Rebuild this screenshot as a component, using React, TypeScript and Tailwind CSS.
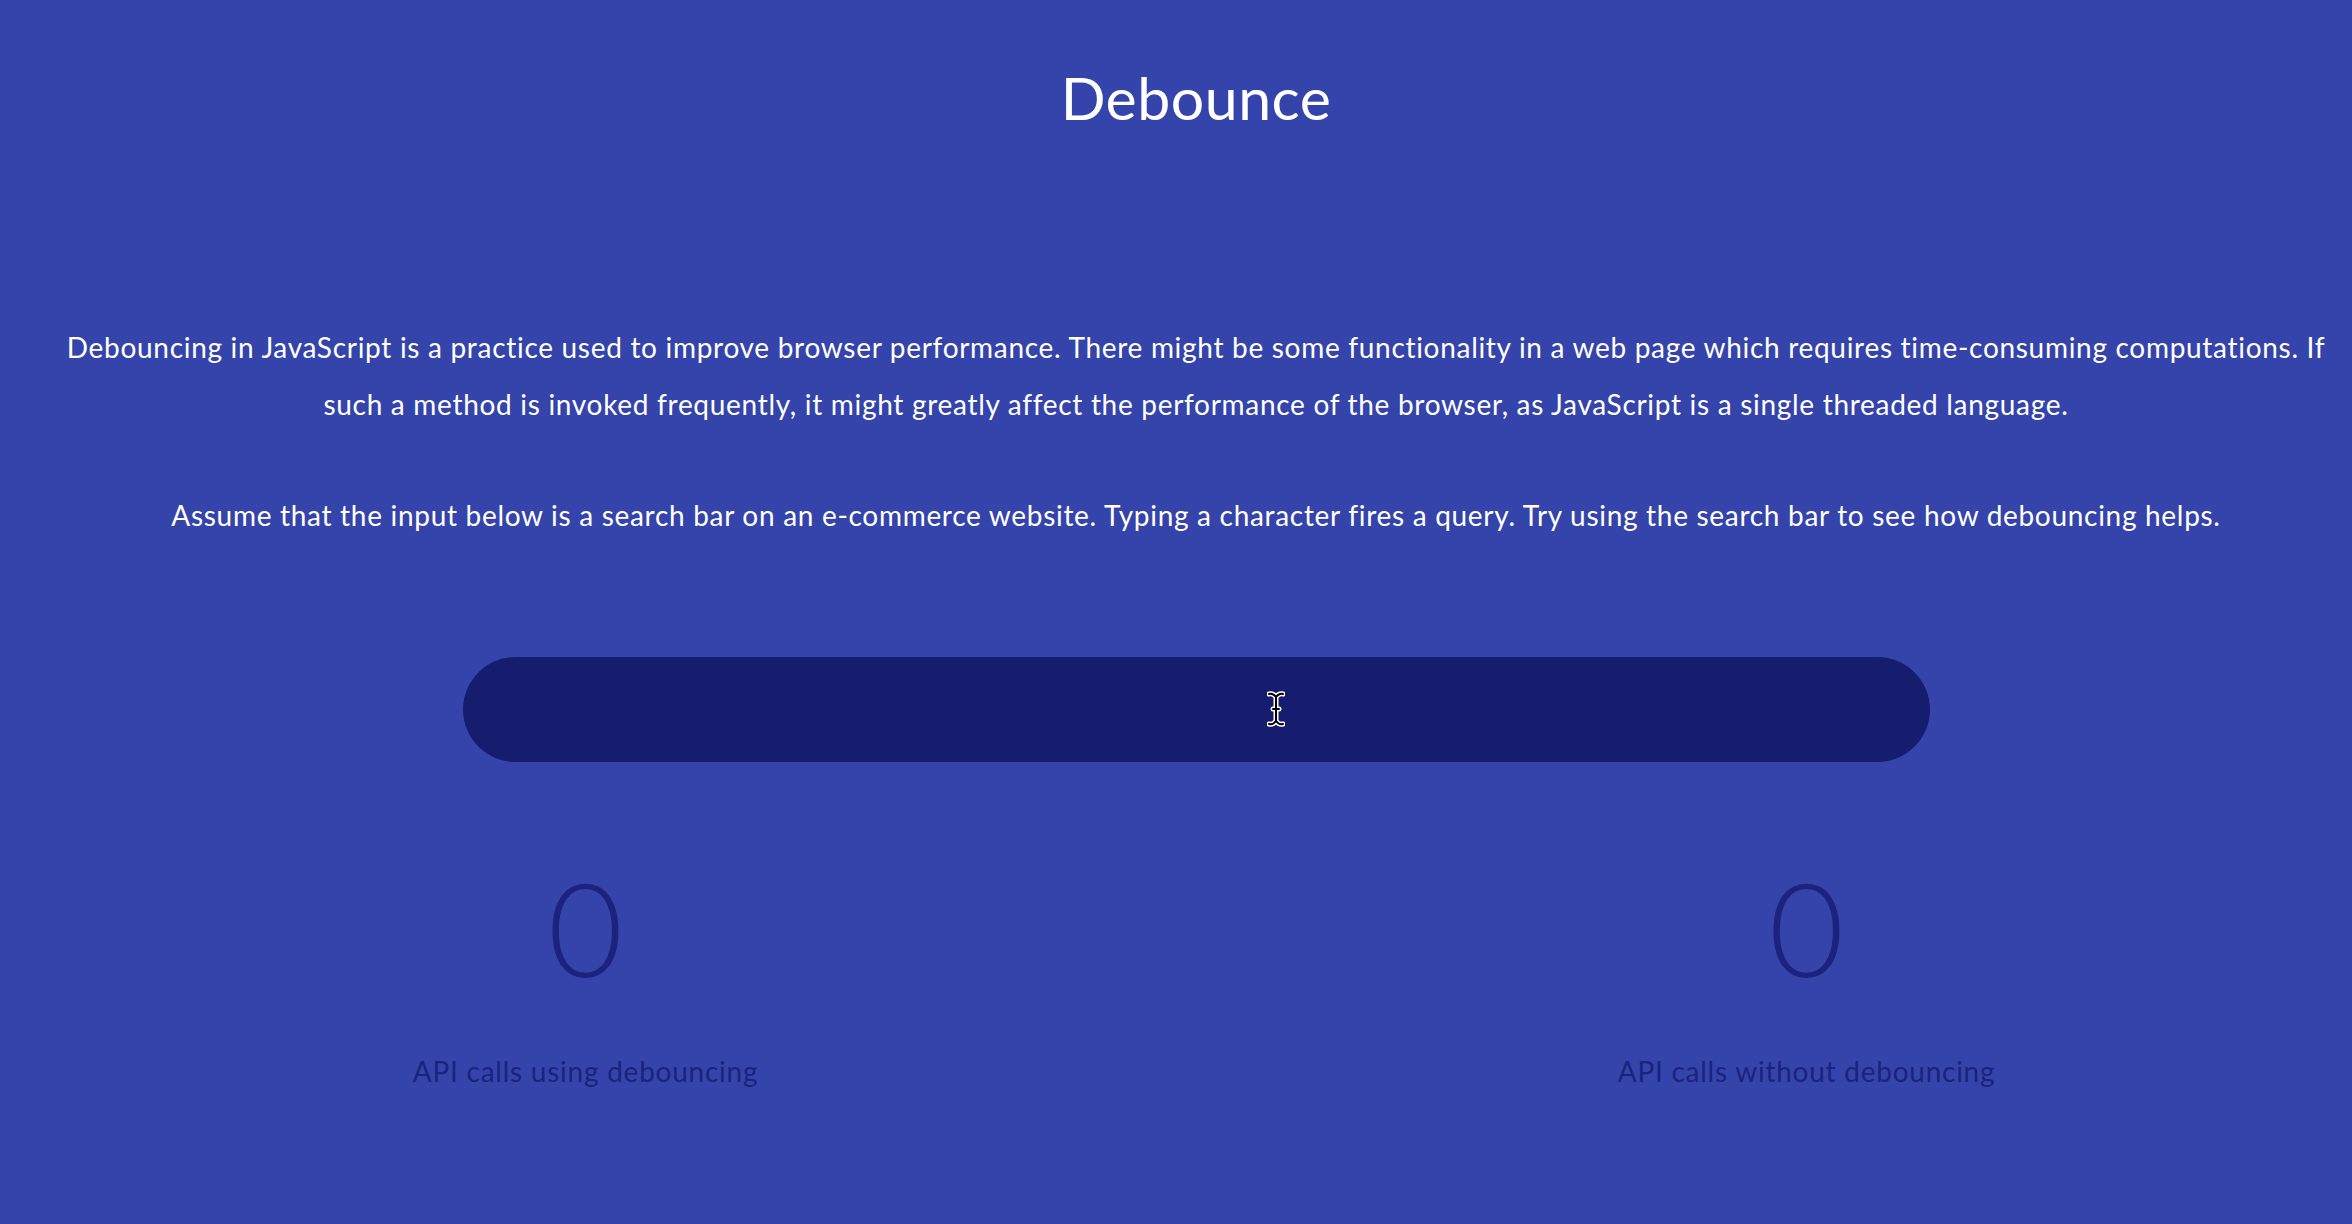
import React from 'react';

const font = { fontFamily: 'Lato, "Open Sans", sans-serif' };

const Counter = ({ value, label }: { value: number; label: string }) => (
  <div className="flex w-[420px] flex-col items-center">
    <div className="text-[130px] font-light leading-none text-[#1b237c]">{value}</div>
    <div className="mt-[59px] text-[28px] leading-[40px] tracking-[0.75px] text-[#1b237c]">{label}</div>
  </div>
);

export default function App() {
  return (
    <div className="min-h-[1224px] w-full overflow-hidden bg-[#3544ab] pl-[40px]" style={font}>
      <div className="flex flex-col items-center">
        <h1 className="mt-[68px] text-[59px] leading-[60px] tracking-[0.5px] text-white">Debounce</h1>

        <div className="mt-[191px] text-center text-[28px] leading-[57px] tracking-[0.7px] text-white">
          <p>
            Debouncing in JavaScript is a practice used to improve browser performance. There might be some functionality in a web page which requires time-consuming computations. If
            <br />
            such a method is invoked frequently, it might greatly affect the performance of the browser, as JavaScript is a single threaded language.
          </p>
          <p className="mt-[54px]">
            Assume that the input below is a search bar on an e-commerce website. Typing a character fires a query. Try using the search bar to see how debouncing helps.
          </p>
        </div>

        <div className="relative mt-[113px] h-[105px] w-[1467px] rounded-full bg-[#161c6e]">
          <input className="h-full w-full rounded-full bg-transparent px-10 text-[28px] text-white outline-none" />
          {/* mouse cursor from the capture */}
          <svg className="absolute left-[804px] top-[34px]" width="18" height="36" viewBox="0 0 18 36">
            <path d="M2 3 Q6 2 9 6 Q12 2 16 3 M9 6 V30 M2 33 Q6 34 9 30 Q12 34 16 33 M6 18 H12" fill="none" stroke="white" strokeWidth="5" strokeLinecap="round" />
            <path d="M2 3 Q6 2 9 6 Q12 2 16 3 M9 6 V30 M2 33 Q6 34 9 30 Q12 34 16 33 M6 18 H12" fill="none" stroke="black" strokeWidth="2" strokeLinecap="round" />
          </svg>
        </div>

        <div className="mt-[100px] flex gap-[801px]">
          <Counter value={0} label="API calls using debouncing" />
          <Counter value={0} label="API calls without debouncing" />
        </div>
      </div>
    </div>
  );
}
